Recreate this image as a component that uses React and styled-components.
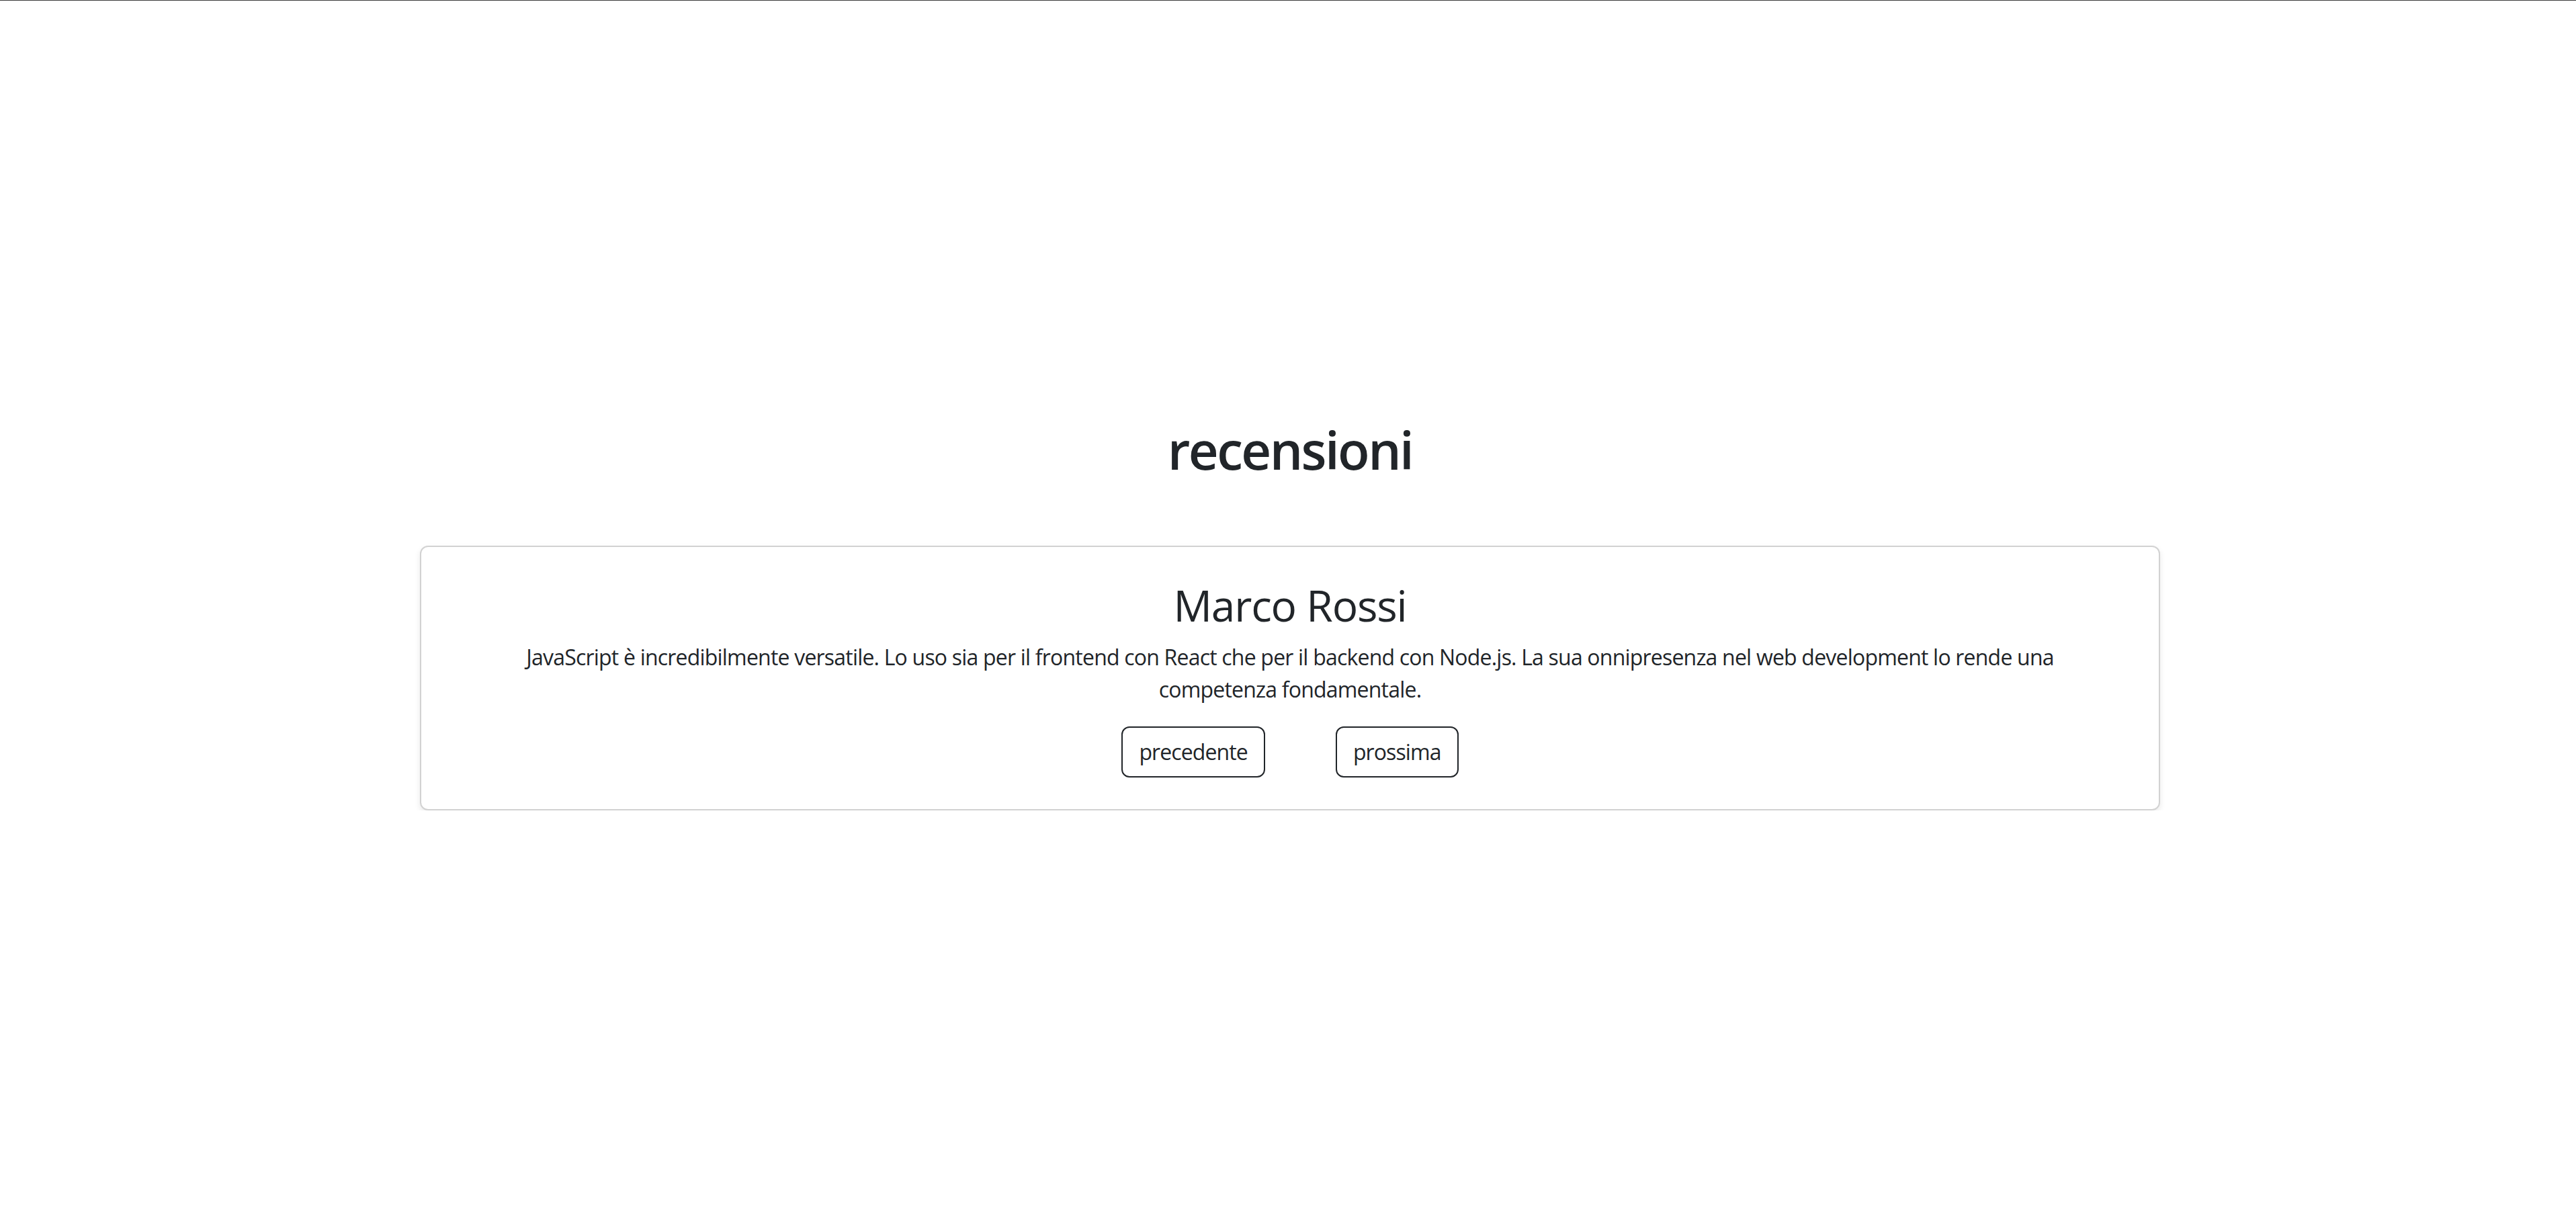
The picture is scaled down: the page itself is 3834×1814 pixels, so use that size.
import styled, { createGlobalStyle } from "styled-components";
import { useState } from "react";

const reviews = [
  {
    name: "Marco Rossi",
    text: "JavaScript è incredibilmente versatile. Lo uso sia per il frontend con React che per il backend con Node.js. La sua onnipresenza nel web development lo rende una competenza fondamentale.",
  },
  {
    name: "Giulia Bianchi",
    text: "Con JavaScript posso creare interfacce dinamiche e interattive in poco tempo. È il linguaggio che uso ogni giorno.",
  },
];

const GlobalStyle = createGlobalStyle`
  body {
    margin: 0;
    font-family: "Open Sans", "Noto Sans", sans-serif;
    color: #212529;
    background: #fff;
    border-top: 1px solid #3c3c3c;
  }
`;

const App = () => {
  const [index, setIndex] = useState(0);
  const review = reviews[index];

  const prev = () => setIndex((index - 1 + reviews.length) % reviews.length);
  const next = () => setIndex((index + 1) % reviews.length);

  return (
    <>
      <GlobalStyle />
      <Wrapper>
        <Title>recensioni</Title>
        <Card>
          <Name>{review.name}</Name>
          <Text>{review.text}</Text>
          <Buttons>
            <Button onClick={prev}>precedente</Button>
            <Button onClick={next}>prossima</Button>
          </Buttons>
        </Card>
      </Wrapper>
    </>
  );
};

const Wrapper = styled.div`
  display: flex;
  flex-direction: column;
  align-items: center;
  padding: 620px 0 0 6px;
`;

const Title = styled.h1`
  margin: 0 0 95px;
  font-size: 78px;
  line-height: 96px;
  font-weight: 600;
  letter-spacing: -2.6px;
`;

const Card = styled.div`
  box-sizing: border-box;
  width: 2590px;
  padding: 49px 48px 47px;
  display: flex;
  flex-direction: column;
  align-items: center;
  text-align: center;
  border: 2px solid rgba(0, 0, 0, 0.175);
  border-radius: 12px;
  box-shadow: 0 4px 10px rgba(0, 0, 0, 0.09);
`;

const Name = styled.h2`
  margin: 0 0 16px;
  font-size: 64px;
  line-height: 75px;
  font-weight: 500;
  letter-spacing: -1.2px;
`;

const Text = styled.p`
  margin: 0 0 31px;
  max-width: 2320px;
  font-size: 32px;
  line-height: 48px;
  letter-spacing: -0.8px;
`;

const Buttons = styled.div`
  display: flex;
  gap: 105px;
`;

const Button = styled.button`
  box-sizing: border-box;
  height: 76px;
  padding: 0 24px;
  font-family: inherit;
  font-size: 32px;
  line-height: 48px;
  letter-spacing: -0.9px;
  color: #212529;
  background: transparent;
  border: 2px solid #212529;
  border-radius: 12px;
  cursor: pointer;
`;

export default App;
